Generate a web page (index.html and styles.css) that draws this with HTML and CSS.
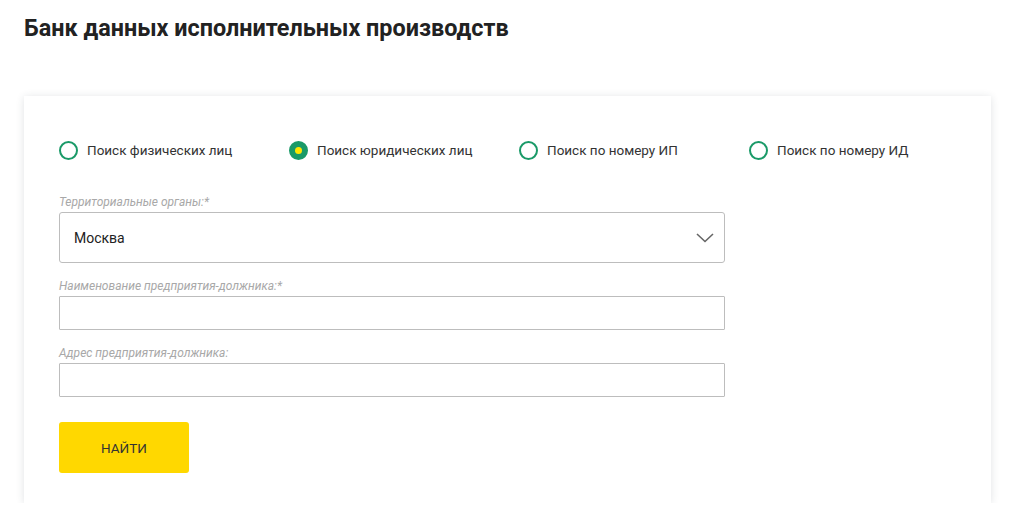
FILE: index.html
```html
<!DOCTYPE html>
<html lang="ru">
<head>
  <meta charset="UTF-8">
  <title>Банк данных исполнительных производств</title>
  <link rel="stylesheet" href="styles.css">
</head>
<body>
  <h1 class="title">Банк данных исполнительных производств</h1>

  <div class="card">
    <div class="tabs">
      <label class="tab"><span class="radio"></span>Поиск физических лиц</label>
      <label class="tab"><span class="radio checked"></span>Поиск юридических лиц</label>
      <label class="tab"><span class="radio"></span>Поиск по номеру ИП</label>
      <label class="tab"><span class="radio"></span>Поиск по номеру ИД</label>
    </div>

    <form class="form">
      <div class="field">
        <div class="label">Территориальные органы:*</div>
        <div class="select">
          <span>Москва</span>
          <svg width="18" height="10" viewBox="0 0 18 10"><path d="M1 1l8 7.5L17 1" fill="none" stroke="#666" stroke-width="1.6"/></svg>
        </div>
      </div>
      <div class="field">
        <div class="label">Наименование предприятия-должника:*</div>
        <div class="input"></div>
      </div>
      <div class="field">
        <div class="label">Адрес предприятия-должника:</div>
        <div class="input"></div>
      </div>
      <button type="button" class="btn">НАЙТИ</button>
    </form>
  </div>
</body>
</html>
```

FILE: styles.css
```css
body {
  margin: 0;
  padding: 0 33px 0 24px;
  font-family: Roboto, "Liberation Sans", sans-serif;
  background: #fff;
  color: #222;
}
.title {
  margin: 14px 0 0;
  font-size: 23.4px;
  line-height: 28px;
  font-weight: 700;
  color: #222;
}
.card {
  margin-top: 54px;
  background: #fff;
  padding: 44px 35px 30px;
  box-shadow: 0 1px 8px rgba(40, 60, 70, 0.14);
}
.tabs {
  display: flex;
  height: 20px;
  align-items: center;
}
.tab {
  flex: none;
  width: 230px;
  display: flex;
  align-items: center;
  font-size: 13.5px;
  color: #333;
}
.radio {
  flex: none;
  width: 15px;
  height: 15px;
  border: 2px solid #1a9a68;
  border-radius: 50%;
  margin-right: 9px;
  position: relative;
}
.radio.checked {
  background: #1a9a68;
}
.radio.checked::after {
  content: "";
  position: absolute;
  left: 4px;
  top: 4px;
  width: 7px;
  height: 7px;
  border-radius: 50%;
  background: #ffe600;
}
.form {
  width: 666px;
  margin-top: 35px;
}
.field {
  margin-bottom: 16px;
}
.label {
  font-size: 12px;
  line-height: 14px;
  font-style: italic;
  color: #a8a8a8;
  margin-bottom: 3px;
}
.select {
  height: 49px;
  border: 1px solid #bdbdbd;
  border-radius: 3px;
  display: flex;
  align-items: center;
  justify-content: space-between;
  padding: 0 10px 0 14px;
  font-size: 14px;
  color: #222;
}
.input {
  height: 32px;
  border: 1px solid #bdbdbd;
  border-radius: 1px;
}
.btn {
  display: block;
  margin-top: 25px;
  width: 130px;
  height: 51px;
  background: #ffd800;
  border: none;
  border-radius: 3px;
  font-family: Roboto, "Liberation Sans", sans-serif;
  font-size: 13.5px;
  font-weight: 400;
  color: #333;
  cursor: pointer;
}
```
